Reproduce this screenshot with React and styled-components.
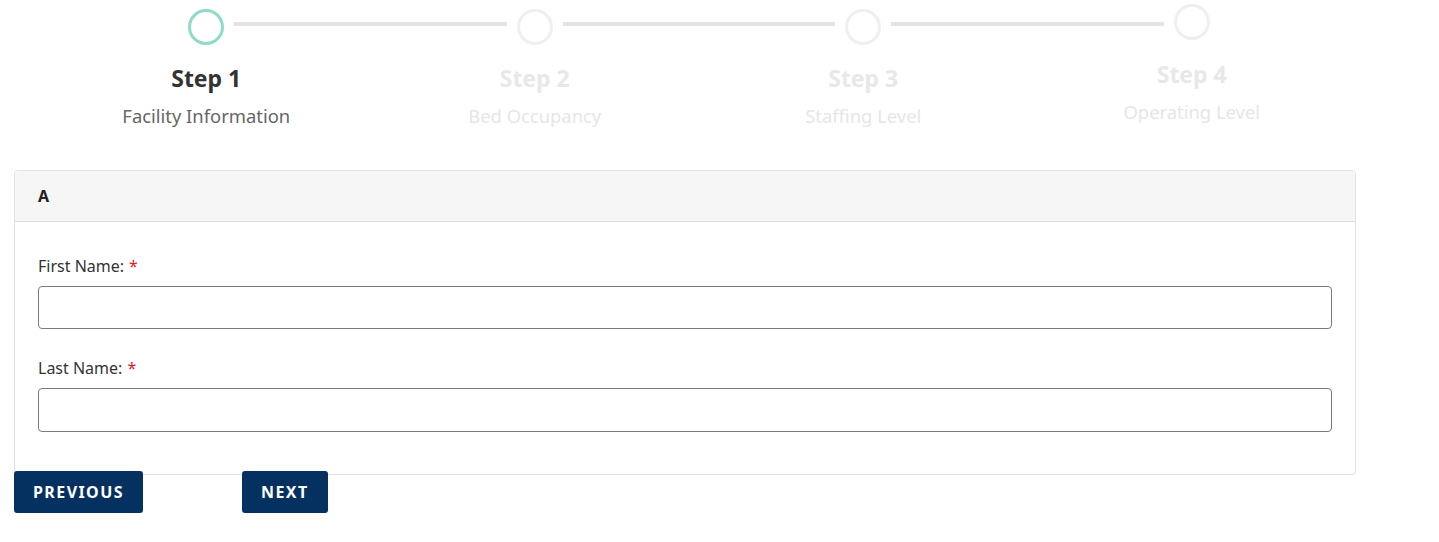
import React from "react";
import styled, { createGlobalStyle } from "styled-components";

const GlobalStyle = createGlobalStyle`
  body {
    margin: 0;
    background: #fff;
    font-family: "Noto Sans", "Open Sans", sans-serif;
    color: #333;
  }
  * { box-sizing: border-box; }
`;

const steps = [
  { title: "Step 1", sub: "Facility Information" },
  { title: "Step 2", sub: "Bed Occupancy" },
  { title: "Step 3", sub: "Staffing Level" },
  { title: "Step 4", sub: "Operating Level", raised: true },
];

const Page = styled.div`
  width: 1439px;
  padding-top: 9px;
`;

const Stepper = styled.div`
  margin-left: 42px;
  width: 1314px;
`;

const CircleRow = styled.div`
  display: flex;
  align-items: flex-start;
  padding: 0 146px;
`;

const Circle = styled.div`
  width: 36px;
  height: 36px;
  flex: none;
  border-radius: 50%;
  border: 3px solid ${({ $active }) => ($active ? "#8fdbc7" : "#efefef")};
  margin-top: ${({ $raised }) => ($raised ? "-5px" : "0")};
`;

const Line = styled.div`
  flex: 1;
  height: 4px;
  margin: 13px 10px 0;
  background: #e4e4e4;
`;

const LabelRow = styled.div`
  display: grid;
  grid-template-columns: repeat(4, 1fr);
  align-items: start;
  margin-top: 18px;
`;

const StepLabel = styled.div`
  display: flex;
  flex-direction: column;
  align-items: center;
  margin-top: ${({ $raised }) => ($raised ? "-4px" : "0")};
`;

const StepTitle = styled.div`
  font-size: 23px;
  line-height: 30px;
  font-weight: 700;
  color: ${({ $active }) => ($active ? "#333" : "#e8e8e8")};
`;

const StepSub = styled.div`
  margin-top: 10px;
  font-size: 18.4px;
  line-height: 26px;
  color: ${({ $active }) => ($active ? "#666" : "#e6e6e6")};
`;

const Card = styled.div`
  margin: 41px 0 0 14px;
  width: 1342px;
  border: 1px solid #e3e3e3;
  border-radius: 4px;
  overflow: hidden;
`;

const CardHeader = styled.div`
  height: 51px;
  display: flex;
  align-items: center;
  padding: 0 23px;
  background: #f6f6f6;
  border-bottom: 1px solid #dedede;
  font-size: 16px;
  font-weight: 700;
  color: #222;
`;

const CardBody = styled.div`
  padding: 32px 23px 42px;
  display: flex;
  flex-direction: column;
  gap: 27px;
`;

const Field = styled.div`
  display: flex;
  flex-direction: column;
  gap: 8px;
`;

const Label = styled.label`
  font-size: 16px;
  line-height: 24px;
  color: #333;
`;

const Required = styled.span`
  color: #e01b1b;
  margin-left: 5px;
`;

const Input = styled.input`
  height: ${({ $h }) => $h || "43px"};
  width: 100%;
  border: 1px solid #7b7b7b;
  border-radius: 4px;
  font-family: inherit;
  font-size: 16px;
  padding: 0 12px;
`;

const Actions = styled.div`
  display: flex;
  gap: 99px;
  margin: -4px 0 0 14px;
`;

const Button = styled.button`
  height: 42px;
  padding: 0 19px;
  background: #04315f;
  color: #fff;
  border: none;
  border-radius: 3px;
  font-family: inherit;
  font-size: 16px;
  font-weight: 700;
  letter-spacing: 1.42px;
  text-transform: uppercase;
  cursor: pointer;
`;

export default function App() {
  return (
    <Page>
      <GlobalStyle />
      <Stepper>
        <CircleRow>
          {steps.map((s, i) => (
            <React.Fragment key={s.title}>
              {i > 0 && <Line />}
              <Circle $active={i === 0} $raised={s.raised} />
            </React.Fragment>
          ))}
        </CircleRow>
        <LabelRow>
          {steps.map((s, i) => (
            <StepLabel key={s.title} $raised={s.raised}>
              <StepTitle $active={i === 0}>{s.title}</StepTitle>
              <StepSub $active={i === 0}>{s.sub}</StepSub>
            </StepLabel>
          ))}
        </LabelRow>
      </Stepper>

      <Card>
        <CardHeader>A</CardHeader>
        <CardBody>
          <Field>
            <Label>
              First Name:<Required>*</Required>
            </Label>
            <Input type="text" />
          </Field>
          <Field>
            <Label>
              Last Name:<Required>*</Required>
            </Label>
            <Input type="text" $h="44px" />
          </Field>
        </CardBody>
      </Card>

      <Actions>
        <Button>Previous</Button>
        <Button>Next</Button>
      </Actions>
    </Page>
  );
}
